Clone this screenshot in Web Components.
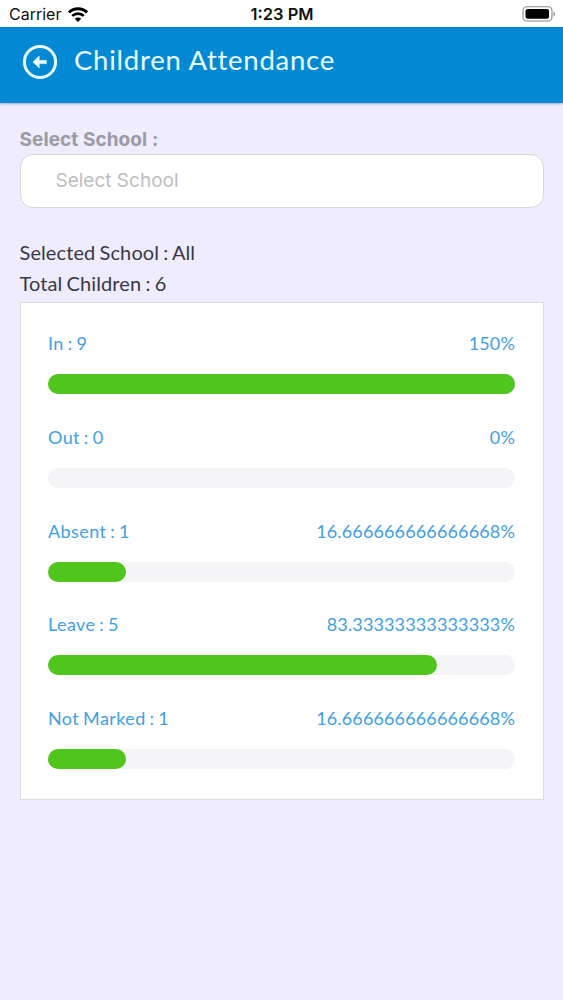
<!DOCTYPE html>
<html lang="en">
<head>
  <meta charset="UTF-8">
  <meta name="viewport" content="width=device-width, initial-scale=1.0">
  <title>Children Attendance</title>
  <style>
    body {
      margin: 0;
      min-height: 100vh;
      background: #eeecfd;
      font-family: Lato, "Open Sans", sans-serif;
      color: #3a3846;
    }

    main {
      padding: 25px 19.5px 0 19.5px;
    }

    attendance-card {
      margin-top: 3px;
    }
  </style>
</head>
<body>
  <status-bar carrier="Carrier" time="1:23 PM"></status-bar>
  <app-header>Children Attendance</app-header>

  <main>
    <school-select label="Select School :" placeholder="Select School"></school-select>
    <school-summary>
      <div>Selected School : All</div>
      <div>Total Children : 6</div>
    </school-summary>
    <attendance-card>
      <attendance-row label="In : 9" value="150"></attendance-row>
      <attendance-row label="Out : 0" value="0"></attendance-row>
      <attendance-row label="Absent : 1" value="16.666666666666668"></attendance-row>
      <attendance-row label="Leave : 5" value="83.33333333333333"></attendance-row>
      <attendance-row label="Not Marked : 1" value="16.666666666666668"></attendance-row>
    </attendance-card>
  </main>

  <script>
    class StatusBar extends HTMLElement {
      connectedCallback() {
        this.attachShadow({ mode: 'open' }).innerHTML = `
          <style>
            :host {
              display: grid;
              grid-template-columns: 1fr auto 1fr;
              align-items: center;
              height: 27px;
              box-sizing: border-box;
              padding: 1px 8px 0 9px;
              background: #fff;
              color: #111;
              font: 16.5px/26px Inter, sans-serif;
            }
            .left { display: flex; align-items: center; gap: 7px; }
            .left span { font-size: 16px; }
            .time { font-weight: 600; }
            .battery { justify-self: end; margin-right: -1px; }
            svg { display: block; }
          </style>
          <div class="left">
            <span>${this.getAttribute('carrier')}</span>
            <svg width="20" height="15" viewBox="0 0 20 15" fill="none" stroke="#000" stroke-width="3">
              <path d="M1 5.4a12.8 12.8 0 0 1 18 0"/>
              <path d="M4.2 8.9a8.3 8.3 0 0 1 11.6 0" stroke-width="2.7"/>
              <path d="M10 15 6.8 11.7a4.6 4.6 0 0 1 6.4 0z" fill="#000" stroke="none"/>
            </svg>
          </div>
          <span class="time">${this.getAttribute('time')}</span>
          <svg class="battery" width="34" height="16" viewBox="0 0 34 16">
            <rect x="1" y=".8" width="29" height="14.2" rx="4" fill="none" stroke="#8a8a8a" stroke-width="1.1"/>
            <rect x="3.5" y="3" width="23.5" height="9.8" rx="2" fill="#000"/>
            <path d="M31.5 5.4c2 .8 2 4.2 0 5z" fill="#999"/>
          </svg>
        `;
      }
    }

    class AppHeader extends HTMLElement {
      connectedCallback() {
        this.attachShadow({ mode: 'open' }).innerHTML = `
          <style>
            :host {
              display: flex;
              align-items: center;
              gap: 16px;
              height: 76px;
              box-sizing: border-box;
              padding: 0 22px 7px;
              background: #0389d3;
              color: #e9fdff;
              font-size: 27.5px;
              line-height: 36px;
              letter-spacing: 0.75px;
              box-shadow: 0 1px 2px #9aafc9;
            }
            svg { flex: none; display: block; }
            .title { margin-top: -3px; }
          </style>
          <svg width="36" height="36" viewBox="0 0 36 36">
            <circle cx="18" cy="18" r="15.6" fill="none" stroke="#e9fdff" stroke-width="3"/>
            <path d="M11 18 17.2 12v4.4h7.2v3.2h-7.2V24z" fill="#e9fdff" stroke="#e9fdff" stroke-width=".6" stroke-linejoin="round"/>
          </svg>
          <span class="title"><slot></slot></span>
        `;
      }
    }

    class SchoolSelect extends HTMLElement {
      connectedCallback() {
        this.attachShadow({ mode: 'open' }).innerHTML = `
          <style>
            :host {
              display: block;
              font-family: Inter, sans-serif;
            }
            .label {
              font-size: 19px;
              font-weight: 700;
              line-height: 24px;
              letter-spacing: 0.08px;
              color: #9c9aa5;
              margin-bottom: 2px;
            }
            .field {
              height: 54px;
              box-sizing: border-box;
              border: 1px solid #d9d7de;
              border-radius: 13px;
              background: #fff;
              padding: 0 35px;
              font-size: 19px;
              line-height: 51px;
              color: #bdbdbf;
            }
          </style>
          <div class="label">${this.getAttribute('label')}</div>
          <div class="field">${this.getAttribute('placeholder')}</div>
        `;
      }
    }

    class SchoolSummary extends HTMLElement {
      connectedCallback() {
        this.attachShadow({ mode: 'open' }).innerHTML = `
          <style>
            :host {
              display: block;
              margin-top: 29px;
              font-size: 20px;
              line-height: 31px;
              letter-spacing: 0.1px;
              word-spacing: -1px;
            }
          </style>
          <slot></slot>
        `;
      }
    }

    class AttendanceCard extends HTMLElement {
      connectedCallback() {
        this.attachShadow({ mode: 'open' }).innerHTML = `
          <style>
            :host {
              display: flex;
              flex-direction: column;
              gap: 30.75px;
              height: 498px;
              box-sizing: border-box;
              padding: 28px 27.5px 0;
              border: 1px solid #dcdbe2;
              background: #fff;
            }
          </style>
          <slot></slot>
        `;
      }
    }

    class AttendanceRow extends HTMLElement {
      connectedCallback() {
        const value = this.getAttribute('value');
        // attendance can exceed the head count, the bar stops at full
        const width = Math.min(Number(value), 100);
        this.attachShadow({ mode: 'open' }).innerHTML = `
          <style>
            :host { display: block; }
            .text {
              display: flex;
              justify-content: space-between;
              height: 24px;
              margin-bottom: 19px;
              font-size: 18px;
              line-height: 24px;
              letter-spacing: 0.4px;
              word-spacing: -1.1px;
              color: #429fe2;
            }
            .percent { letter-spacing: 0.14px; }
            .track {
              height: 20px;
              border-radius: 10px;
              background: #f5f4f6;
            }
            .fill {
              width: ${width}%;
              height: 100%;
              border-radius: 10px;
              background: #50c51b;
            }
          </style>
          <div class="text">
            <span>${this.getAttribute('label')}</span>
            <span class="percent">${value}%</span>
          </div>
          <div class="track"><div class="fill"></div></div>
        `;
      }
    }

    customElements.define('status-bar', StatusBar);
    customElements.define('app-header', AppHeader);
    customElements.define('school-select', SchoolSelect);
    customElements.define('school-summary', SchoolSummary);
    customElements.define('attendance-card', AttendanceCard);
    customElements.define('attendance-row', AttendanceRow);
  </script>
</body>
</html>
